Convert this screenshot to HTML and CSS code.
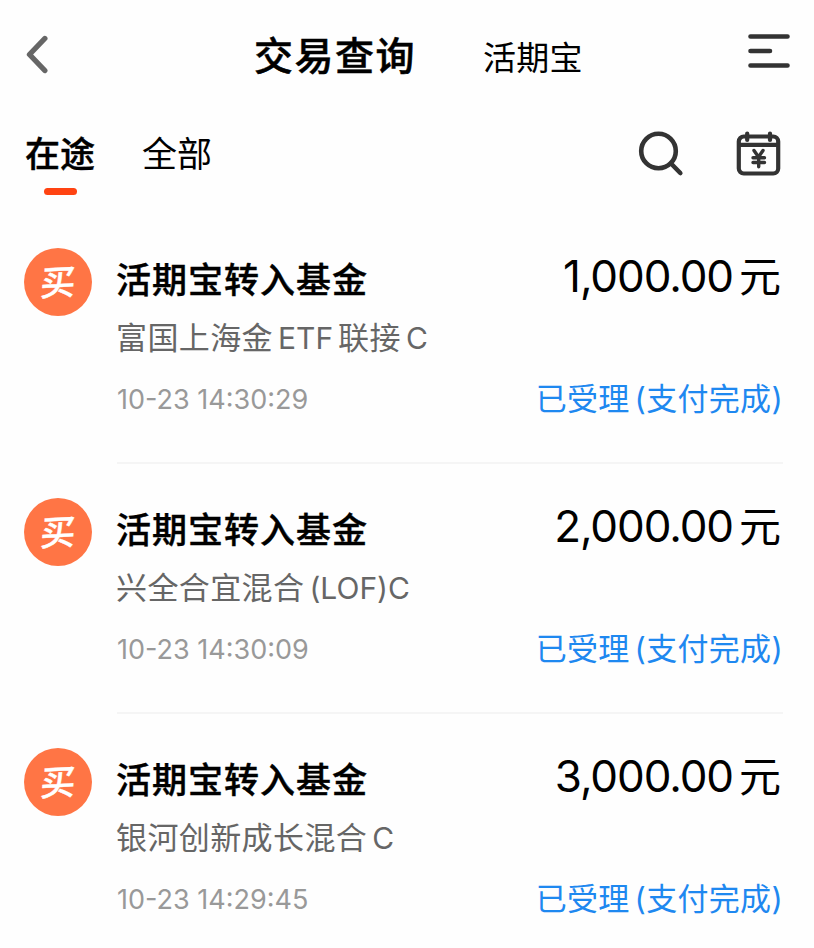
FILE: index.html
```
<!DOCTYPE html>
<html lang="zh-CN">
<head>
    <meta charset="UTF-8">
    <meta name="viewport" content="width=device-width, initial-scale=1.0">
    <title>交易查询</title>
    <link rel="stylesheet" href="styles.css">
</head>
<body>

<!-- Top bar -->
<header class="header">
    <svg class="icon-back" width="24" height="40" viewBox="0 0 24 40" fill="none" stroke="#666" stroke-width="5.4" stroke-linecap="round" stroke-linejoin="round">
        <path d="M20.800 3.500L5.500 19.500L20.800 35.500"/>
    </svg>
    <h1 class="header-title">交易查询</h1>
    <a class="header-link">活期宝</a>
    <svg class="icon-menu" width="44" height="36" viewBox="0 0 44 36" fill="none" stroke="#333" stroke-width="4.6" stroke-linecap="round">
        <path d="M2.500 3.500H39.500M2.500 18H22M2.500 32.500H39.500"/>
    </svg>
</header>

<!-- Tabs -->
<nav class="tabs">
    <a class="tab active">在途</a>
    <a class="tab">全部</a>
    <div class="tools">
        <svg width="46" height="46" viewBox="0 0 46 46" fill="none" stroke="#333" stroke-width="4.6" stroke-linecap="round">
            <circle cx="20.500" cy="20" r="17.300"/>
            <path d="M33 32.500L42.300 42"/>
        </svg>
        <svg width="46" height="46" viewBox="0 0 46 46" fill="none" stroke="#333" stroke-width="4.200" stroke-linecap="round" stroke-linejoin="round">
            <rect x="2.800" y="5.500" width="39.400" height="37" rx="5"/>
            <path d="M4 13.800H41M11.200 2.500V9M34 2.500V9"/>
            <path stroke-width="3.400" d="M18 19.500L22.500 26L27 19.500M17 26.800H28.500M17 31.500H28.500M22.700 26.500V35.800"/>
        </svg>
    </div>
</nav>

<!-- Transactions -->
<ul class="list">
    <li class="item">
        <div class="badge"><span>买</span></div>
        <div class="content">
            <div class="row">
                <h2 class="name">活期宝转入基金</h2>
                <div class="amount">1,000.00<span class="unit">元</span></div>
            </div>
            <div class="fund">富国上海金<span class="latin">ETF</span><span class="gap">联接</span><span class="latin">C</span></div>
            <div class="row meta">
                <div class="time">10-23 14:30:29</div>
                <div class="status">已受理<span class="paren">(</span>支付完成)</div>
            </div>
        </div>
    </li>
    <li class="item">
        <div class="badge"><span>买</span></div>
        <div class="content">
            <div class="row">
                <h2 class="name">活期宝转入基金</h2>
                <div class="amount">2,000.00<span class="unit">元</span></div>
            </div>
            <div class="fund">兴全合宜混合<span class="latin">(LOF)C</span></div>
            <div class="row meta">
                <div class="time">10-23 14:30:09</div>
                <div class="status">已受理<span class="paren">(</span>支付完成)</div>
            </div>
        </div>
    </li>
    <li class="item">
        <div class="badge"><span>买</span></div>
        <div class="content">
            <div class="row">
                <h2 class="name">活期宝转入基金</h2>
                <div class="amount">3,000.00<span class="unit">元</span></div>
            </div>
            <div class="fund">银河创新成长混合<span class="latin">C</span></div>
            <div class="row meta">
                <div class="time">10-23 14:29:45</div>
                <div class="status">已受理<span class="paren">(</span>支付完成)</div>
            </div>
        </div>
    </li>
</ul>

</body>
</html>
```
FILE: styles.css
```
* {
    box-sizing: border-box;
    margin: 0;
    padding: 0;
}
body {
    font-family: Inter, "Noto Sans CJK SC", sans-serif;
    background-color: #fefefe;
    color: #000;
    height: 948px;
    overflow: hidden;
}
.header {
    display: flex;
    align-items: center;
    height: 110px;
    padding: 0 22px 0 24px;
}
.header-title {
    margin-top: 2px;
    margin-left: 206px;
    font-size: 39px;
    font-weight: 500;
    line-height: 60px;
    letter-spacing: 1.5px;
    -webkit-text-stroke: 0.5px #000;
}
.header-link {
    margin-top: 5px;
    margin-left: 67px;
    font-size: 33px;
    line-height: 60px;
    letter-spacing: 0.2px;
}
.icon-menu {
    margin-left: auto;
    margin-bottom: 8px;
}
.tabs {
    display: flex;
    height: 103px;
    padding: 14px 32px 0 25px;
}
.tab {
    position: relative;
    height: 71px;
    margin-right: 47px;
    font-size: 35px;
    line-height: 60px;
}
.tab.active {
    font-weight: 500;
    -webkit-text-stroke: 0.4px #000;
}
.tab.active::after {
    content: "";
    position: absolute;
    left: 19px;
    bottom: 0;
    width: 33px;
    height: 7px;
    border-radius: 4px;
    background-color: #ff4312;
}
.tools {
    display: flex;
    gap: 52px;
    margin-left: auto;
    padding-top: 7px;
}
.list {
    list-style: none;
}
.item {
    display: flex;
    height: 250px;
    padding: 35px 31px 0 24px;
}
.badge {
    width: 68px;
    height: 68px;
    border-radius: 50%;
    background-color: #ff7545;
    color: #fff;
    font-size: 35px;
    font-weight: 500;
    line-height: 68px;
    text-align: center;
}
.badge span {
    display: block;
    transform: skew(-3deg, -3deg);
    -webkit-text-stroke: 0.4px #fff;
}
.content {
    flex: 1;
    height: 216px;
    margin-left: 25px;
    border-bottom: 2px solid #f5f5f5;
}
.item:last-child .content {
    border-bottom: none;
}
.row {
    display: flex;
    justify-content: space-between;
    height: 60px;
    padding-right: 2px;
    line-height: 60px;
}
.name {
    margin-left: -1px;
    font-size: 35px;
    font-weight: 500;
    line-height: 64px;
    letter-spacing: 1px;
    -webkit-text-stroke: 0.4px #000;
}
.amount {
    font-size: 44px;
    line-height: 56px;
    letter-spacing: -1.1px;
}
.unit {
    margin-left: 6px;
    font-size: 42px;
    letter-spacing: 0;
}
.fund {
    height: 60px;
    margin-left: -1px;
    color: #666;
    font-size: 31px;
    line-height: 60px;
    letter-spacing: 0.4px;
}
.latin,
.gap {
    margin-left: 5px;
}
.latin {
    font-size: 30px;
    letter-spacing: 0;
}
.meta {
    padding-right: 0;
}
.time {
    color: #999;
    font-size: 27px;
    line-height: 64px;
}
.status {
    color: #1e88f0;
    font-size: 31px;
    line-height: 61px;
    letter-spacing: 0.3px;
}
.paren {
    margin-left: 5px;
}
```
